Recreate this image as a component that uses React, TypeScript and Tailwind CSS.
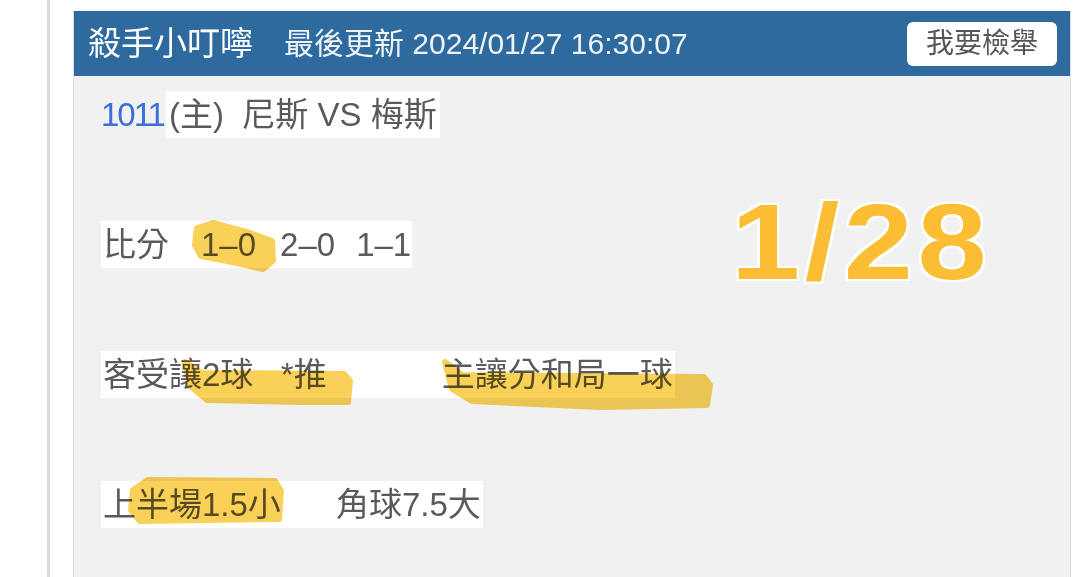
import React from "react";

const FONT = "font-['Liberation_Sans','Noto_Sans_CJK_TC',sans-serif]";

export default function App() {
  return (
    <div className={`relative w-[1080px] h-[577px] overflow-hidden bg-white flex ${FONT}`}>
      <div className="w-[47px] shrink-0" />
      <div className="flex-1 flex border-l-[3px] border-[#dadada] pl-[23px] pt-[11px] pr-[9px]">
        <div className="flex-1 flex flex-col border-x border-[#dedede] bg-[#f1f1f1]">
          <div className="h-[65px] shrink-0 flex items-center bg-[#2f6a9e] pl-[14px] pr-[13px]">
            <span className="text-[33px] text-white leading-none">殺手小叮嚀</span>
            <span className="ml-[31px] text-[30px] text-[#eef3f8] leading-none">最後更新 2024/01/27 16:30:07</span>
            <div className="ml-auto h-[44px] w-[150px] rounded-[6px] bg-white flex items-center justify-center text-[28px] text-[#555] leading-none">
              我要檢舉
            </div>
          </div>
          <div className="flex flex-col pl-[27px] pt-[15px] gap-[83px] text-[33px] text-[#5a5a5a]">
            <div className="h-[47px] flex items-center">
              <span className="text-[#3a6fd8] tracking-[-2px] leading-[47px] pr-[2px]">1011</span>
              <span className="bg-white leading-[47px] pl-[3px] pr-[3px] whitespace-pre">(主)  尼斯 VS 梅斯</span>
            </div>
            <div className="h-[47px] flex items-center">
              <span className="bg-white leading-[47px] pl-[2px] pr-[1px] whitespace-pre">
                比分<span className="ml-[32px]">1–0</span><span className="ml-[24px]">2–0</span><span className="ml-[21px]">1–1</span>
              </span>
            </div>
            <div className="h-[47px] flex items-center">
              <span className="bg-white leading-[47px] px-[2px] whitespace-pre">
                客受讓2球   *推<span className="ml-[115px]">主讓分和局一球</span>
              </span>
            </div>
            <div className="h-[47px] flex items-center">
              <span className="bg-white leading-[47px] px-[2px] whitespace-pre">上半場1.5小      角球7.5大</span>
            </div>
          </div>
        </div>
      </div>

      <svg
        className="absolute left-0 top-0 pointer-events-none mix-blend-multiply"
        width="1080"
        height="577"
        viewBox="0 0 1080 577"
      >
        <g fill="#f8c93c" stroke="#f8c93c" strokeWidth="6" strokeLinejoin="round" opacity="0.85">
          <path d="M197,228 L213,223 L250,233 L272,241 L273,261 L263,269 L232,262 L201,256 L195,245 Z" />
          <path d="M185,362 L201,373 L344,374 L350,381 L348,402 L300,402 L207,400 L190,386 Z" />
          <path d="M445,362 L462,375 L704,377 L710,385 L707,405 L600,407 L472,401 L452,389 Z" />
          <path d="M133,490 L148,480 L275,481 L281,491 L279,519 L140,521 L131,510 Z" />
        </g>
      </svg>

      <div className="absolute left-[731px] top-[188px] origin-left scale-x-[1.15] text-[108px] tracking-[4px] leading-none font-bold text-[#fbbd33] font-['Liberation_Sans',sans-serif] [text-shadow:2px_0_0_#fff,-2px_0_0_#fff,0_2px_0_#fff,0_-2px_0_#fff,2px_2px_0_#fff,-2px_-2px_0_#fff,2px_-2px_0_#fff,-2px_2px_0_#fff]">
        1/28
      </div>
    </div>
  );
}
